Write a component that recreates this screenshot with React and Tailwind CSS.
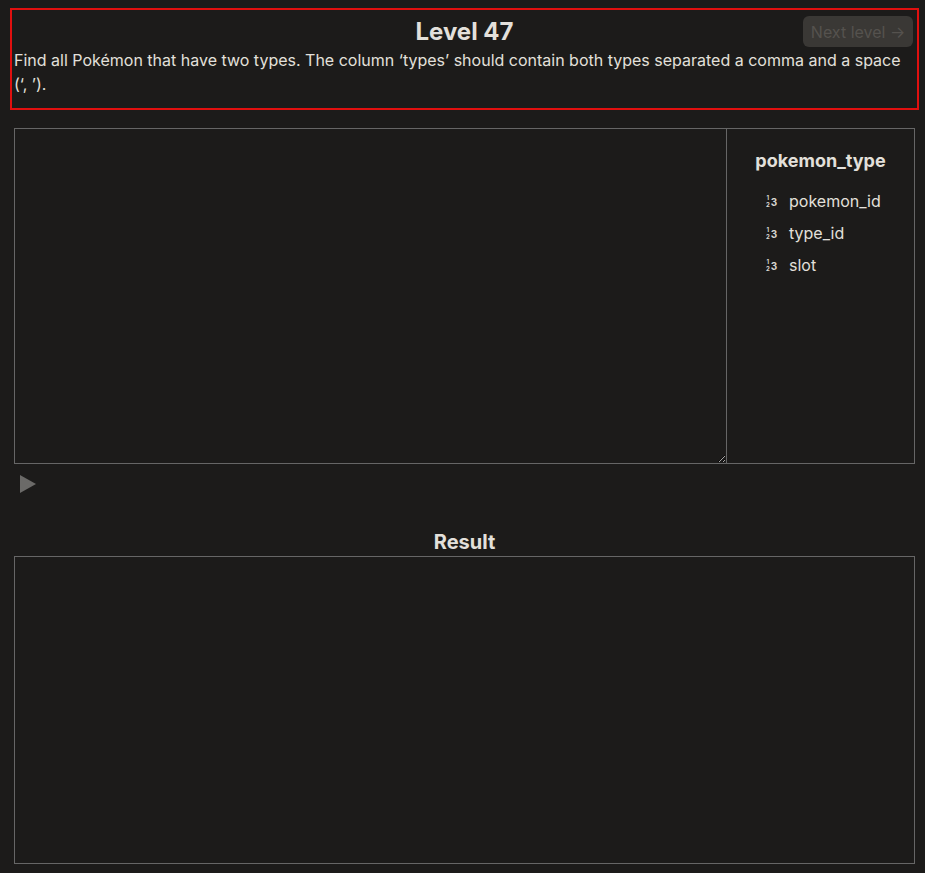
export default function App() {
  const columns = ["pokemon_id", "type_id", "slot"];

  return (
    <div
      className="min-h-[873px] bg-[#1c1b1a] text-[#e3e0db] pl-[10px] pr-[6px] pt-[8px]"
      style={{ fontFamily: "Inter, 'Noto Sans', sans-serif" }}
    >
      {/* LEVEL HEADER */}
      <div className="relative border-2 border-[#e0100f] pl-[2px] pr-[2px] pt-[6px] pb-[12px]">
        <h1 className="text-center text-[24px] leading-[32px] font-bold">Level 47</h1>
        <button className="absolute right-[4px] top-[6px] w-[110px] h-[31px] rounded-md bg-[#3a3835] text-[#55524e] text-[16px]">
          Next level →
        </button>
        <p className="text-[16px] leading-[24px]">
          Find all Pokémon that have two types. The column ‘types’ should contain both types separated a comma and a space (‘, ’).
        </p>
      </div>

      {/* EDITOR + SCHEMA */}
      <div className="mx-[4px] mt-[18px] flex h-[336px] border border-[#666]">
        <textarea className="flex-1 h-full bg-[#1c1b1a] border-r border-[#666] outline-none p-2" />
        <div className="w-[187px] pt-[20px]">
          <h3 className="text-center text-[18px] leading-[24px] font-bold">pokemon_type</h3>
          <ul className="mt-[16px] pl-[39px] space-y-[8px]">
            {columns.map((c) => (
              <li key={c} className="flex items-center h-[24px] text-[16px]">
                <span className="w-[23px] flex items-center font-bold text-[#d8d5d0]">
                  <span className="flex flex-col items-center">
                    <span className="block h-[7px] text-[6px] leading-[7px]">1</span>
                    <span className="block h-[7px] text-[6px] leading-[7px]">2</span>
                  </span>
                  <span className="text-[10px] leading-[10px] ml-[1px] mt-[1px]">3</span>
                </span>
                <span>{c}</span>
              </li>
            ))}
          </ul>
        </div>
      </div>

      {/* RUN BUTTON */}
      <div className="mx-[4px] mt-[11px] h-[18px] pl-[6px]">
        <svg width="16" height="18" viewBox="0 0 16 18">
          <polygon points="0,0 16,9 0,18" fill="#6b6a68" />
        </svg>
      </div>

      {/* RESULT */}
      <h2 className="mt-[35px] text-center text-[20px] leading-[28px] font-bold">Result</h2>
      <div className="mx-[4px] h-[308px] border border-[#666]" />
    </div>
  );
}
